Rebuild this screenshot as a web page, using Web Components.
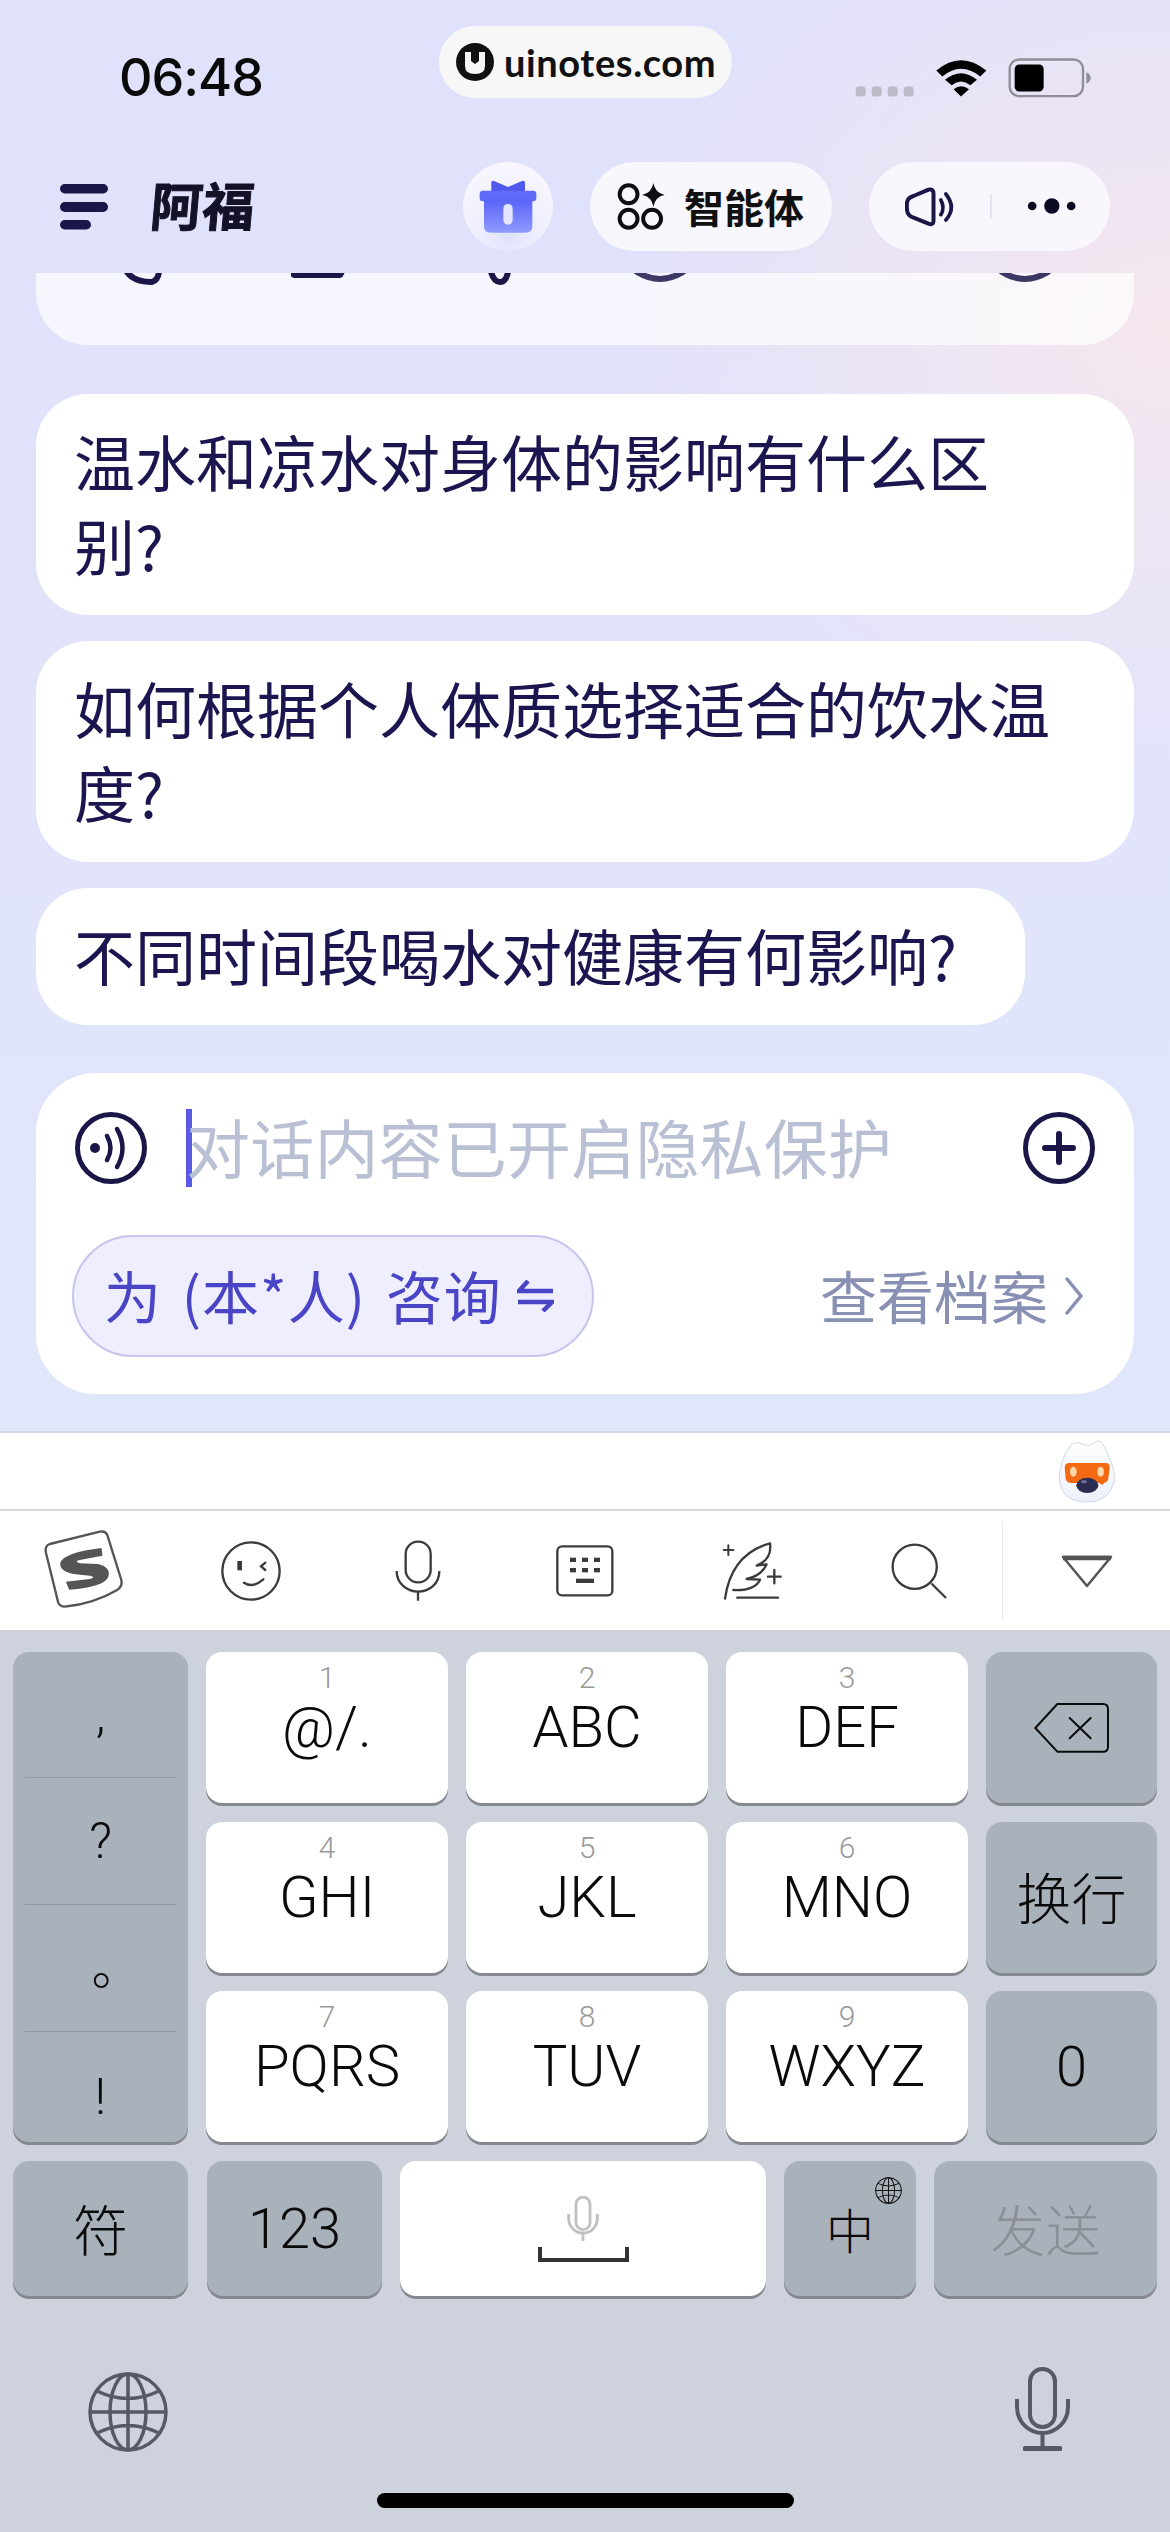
<!DOCTYPE html>
<html lang="zh-CN">
<head>
<meta charset="utf-8">
<title>阿福</title>
<style>
html, body { margin: 0; padding: 0; }
body { width: 1170px; height: 2532px; overflow: hidden; font-family: "Noto Sans CJK SC", "Liberation Sans", sans-serif; }
</style>
</head>
<body>
<app-shell>
  <status-bar time="06:48"></status-bar>
  <chat-header title="阿福"></chat-header>
  <chat-list>
    <suggest-bubble wide>温水和凉水对身体的影响有什么区<br>别?</suggest-bubble>
    <suggest-bubble wide>如何根据个人体质选择适合的饮水温<br>度?</suggest-bubble>
    <suggest-bubble>不同时间段喝水对健康有何影响?</suggest-bubble>
    <chat-input></chat-input>
  </chat-list>
  <ime-toolbar></ime-toolbar>
  <key-board></key-board>
</app-shell>

<script>
const NAVY = "#1a1648"

class AppShell extends HTMLElement {
    constructor() {
        super()
        this.attachShadow({ mode: "open" })
        this.shadowRoot.innerHTML = `
        <style>
        :host {
            display: flex;
            flex-direction: column;
            position: relative;
            width: 1170px;
            height: 2532px;
            background:
                radial-gradient(560px 460px at 100% 13%, rgba(250,232,234,.8), rgba(250,232,234,0)),
                linear-gradient(180deg, #e0e1fb 0, #e1e3fb 600px, #e1e7fb 1431px);
        }
        </style>
        <slot></slot>
        `
    }
}

class StatusBar extends HTMLElement {
    constructor() {
        super()
        this.attachShadow({ mode: "open" })
        this.shadowRoot.innerHTML = `
        <style>
        :host {
            display: flex;
            position: relative;
            justify-content: space-between;
            align-items: flex-start;
            box-sizing: border-box;
            height: 162px;
            padding: 57px 77px 0 119px;
        }
        .time { font: 500 52px/42px Inter, "Liberation Sans", sans-serif; color: #0a0a0a; letter-spacing: -1px; }
        .mark {
            position: absolute;
            left: 439px;
            top: 26px;
            width: 293px;
            height: 72px;
            box-sizing: border-box;
            padding-left: 17px;
            gap: 10px;
            display: flex;
            align-items: center;
            border-radius: 36px;
            background: #f7f7f7;
            color: #111;
            font: 700 38px/72px Lato, "Liberation Sans", sans-serif;
            letter-spacing: 0.6px;
        }
        svg { display: block; flex: none; }
        </style>
        <span class="time">${this.getAttribute("time")}</span>
        <div class="mark">
            <svg width="38" height="38" viewBox="0 0 38 38">
                <circle cx="19" cy="19" r="19" fill="#111"/>
                <path d="M9 9h6v9l4 3 4-3V9h6v14q0 8-10 8T9 23z" fill="#f7f7f7"/>
            </svg>
            <span>uinotes.com</span>
        </div>
        <svg width="240" height="42" viewBox="40 50 720 125">
            <g fill="#bcbcc8">
                <rect x="48" y="138" width="30" height="30" rx="9"/>
                <rect x="96" y="138" width="30" height="30" rx="9"/>
                <rect x="144" y="138" width="30" height="30" rx="9"/>
                <rect x="192" y="138" width="30" height="30" rx="9"/>
            </g>
            <g fill="#000">
                <path d="M290 90Q364 28 440 90L422 108Q364 62 308 108Z"/>
                <path d="M316 118Q364 78 412 118L392 134Q364 112 336 134Z"/>
                <path d="M342 146Q364 128 388 146L364 168Z"/>
            </g>
            <rect x="510" y="57" width="220" height="110" rx="28" fill="none" stroke="#8e8e98" stroke-width="7"/>
            <rect x="525" y="72" width="87" height="81" rx="14" fill="#000"/>
            <path d="M740 95q13 6 13 17t-13 18z" fill="#8e8e98"/>
        </svg>
        `
    }
}

class ChatHeader extends HTMLElement {
    constructor() {
        super()
        this.attachShadow({ mode: "open" })
        this.shadowRoot.innerHTML = `
        <style>
        :host {
            display: flex;
            align-items: center;
            box-sizing: border-box;
            height: 89px;
            margin-bottom: 22px;
            padding: 0 60px;
            color: ${NAVY};
        }
        svg { display: block; flex: none; }
        .title {
            display: inline-block;
            margin: -6px 0 0 43px;
            font: 700 52px/89px "Noto Sans CJK SC", sans-serif;
            color: #141226;
            transform: skewX(-5deg);
            -webkit-text-stroke: 1px #141226;
        }
        .gift {
            margin-left: auto;
            width: 90px;
            height: 89px;
            border-radius: 50%;
            display: flex;
            align-items: center;
            justify-content: center;
            background: radial-gradient(circle at 50% 82%, #dfe2fd 0, #f0f0fd 40%, #f7f6fe 75%);
        }
        .pill {
            display: flex;
            align-items: center;
            height: 89px;
            border-radius: 45px;
            background: rgba(250,249,254,.92);
            box-sizing: border-box;
        }
        .agent { width: 242px; margin-left: 37px; padding-left: 27px; font: 700 40px/89px "Noto Sans CJK SC", sans-serif; color: #111; gap: 19px; }
        .more { width: 241px; margin-left: 37px; margin-right: 0; padding-left: 36px; }
        </style>
        <svg width="48" height="46" viewBox="0 0 48 46">
            <rect x="0" y="0" width="48" height="9.5" rx="4.7" fill="${NAVY}"/>
            <rect x="0" y="18" width="48" height="10" rx="5" fill="${NAVY}"/>
            <rect x="0" y="36" width="31" height="9.5" rx="4.7" fill="${NAVY}"/>
        </svg>
        <span class="title">${this.getAttribute("title")}</span>
        <div class="gift">
            <svg width="58" height="54" viewBox="118 88 174 162">
                <defs><linearGradient id="g" x1="0" y1="0" x2="0" y2="1"><stop offset="0" stop-color="#5a62f7"/><stop offset="1" stop-color="#8e9cff"/></linearGradient></defs>
                <path d="M155 96q0-8 8-5l42 18 42-18q8-3 9 5v26H155z" fill="#5058ee"/>
                <rect x="120" y="120" width="170" height="32" rx="9" fill="#6069f8"/>
                <path d="M133 146h145v80q0 20-20 20H153q-20 0-20-20z" fill="url(#g)"/>
                <rect x="191" y="160" width="28" height="62" rx="14" fill="#e4e6ff"/>
            </svg>
        </div>
        <div class="pill agent">
            <svg width="48" height="48" viewBox="530 100 145 145" fill="none" stroke="#0d0d12" stroke-width="12">
                <circle cx="565" cy="134" r="27"/>
                <circle cx="565" cy="208" r="27"/>
                <circle cx="636" cy="208" r="27"/>
                <path d="M640 100q5 30 34 36q-29 5-34 36q-5-31-34-36q29-6 34-36z" fill="#0d0d12" stroke="none"/>
            </svg>
            <span>智能体</span>
        </div>
        <div class="pill more">
            <svg width="172" height="42" viewBox="190 440 515 126">
                <path d="M215 470L260 451Q275 447 275 464V545Q275 558 260 553L215 535Q195 530 195 505V495Q195 475 215 470Z" fill="none" stroke="${NAVY}" stroke-width="12" stroke-linejoin="round"/>
                <path d="M297 482Q310 505 297 526M312 464Q345 505 312 542" fill="none" stroke="${NAVY}" stroke-width="11" stroke-linecap="round"/>
                <rect x="445" y="463" width="4" height="76" fill="#dcdcea"/>
                <circle cx="571" cy="500" r="13" fill="#0c0a22"/>
                <circle cx="630" cy="500" r="23" fill="#0c0a22"/>
                <circle cx="688" cy="500" r="13" fill="#0c0a22"/>
            </svg>
        </div>
        `
    }
}

class ChatList extends HTMLElement {
    constructor() {
        super()
        this.attachShadow({ mode: "open" })
        this.shadowRoot.innerHTML = `
        <style>
        :host {
            display: flex;
            flex-direction: column;
            box-sizing: border-box;
            height: 1158px;
            padding: 0 36px;
            overflow: hidden;
            flex: none;
        }
        .prev { height: 72px; flex: none; border-radius: 0 0 52px 52px; background: rgba(255,255,255,.7); margin-bottom: 49px; }
        svg { display: block; }
        .items { display: flex; flex-direction: column; gap: 26px; }
        </style>
        <div class="prev">
            <svg width="1098" height="14" viewBox="36 273 1098 14" fill="none" stroke="${NAVY}" stroke-width="6" stroke-linecap="round">
                <path d="M127 272Q134 282 152 282Q158 280 159 272"/>
                <path d="M291 270H346L343 276Q342 278 338 278H296Q292 278 291 276Z" fill="${NAVY}" stroke="none"/>
                <path d="M491 272Q494 282 500 282Q506 282 508 272"/>
                <path d="M637 272Q660 286 683 272" opacity=".85"/>
                <path d="M1002 272Q1025 286 1048 272" opacity=".85"/>
            </svg>
        </div>
        <div class="items"><slot></slot></div>
        `
    }
}

class SuggestBubble extends HTMLElement {
    constructor() {
        super()
        this.attachShadow({ mode: "open" })
        this.shadowRoot.innerHTML = `
        <style>
        :host {
            display: block;
            width: fit-content;
            box-sizing: border-box;
            padding: 25px 68px 28px 38px;
            border-radius: 52px;
            background: #fff;
            color: #1b1650;
            font: 400 61px/84px "Noto Sans CJK SC", sans-serif;
        }
        :host([wide]) { width: 100%; }
        </style>
        <slot></slot>
        `
    }
}

class ChatInput extends HTMLElement {
    constructor() {
        super()
        this.attachShadow({ mode: "open" })
        this.shadowRoot.innerHTML = `
        <style>
        :host {
            display: block;
            box-sizing: border-box;
            height: 321px;
            margin-top: 22px;
            padding: 39px 39px 0 36px;
            border-radius: 60px;
            background: #fff;
        }
        svg { display: block; flex: none; }
        .row { display: flex; align-items: center; }
        .top { height: 72px; padding-left: 3px; }
        .caret { width: 6px; height: 78px; margin-left: 39px; background: #5a5ae6; flex: none; }
        .hint { margin: -6px 0 0 -6px; font: 400 64px/72px "Noto Sans CJK SC", sans-serif; letter-spacing: .2px; color: #b9c0d4; white-space: nowrap; }
        .plus { margin-left: auto; }
        .bottom { margin-top: 51px; height: 122px; }
        .chip {
            display: flex;
            align-items: center;
            box-sizing: border-box;
            width: 522px;
            height: 122px;
            padding-left: 30px;
            border: 2px solid #c8c3ef;
            border-radius: 61px;
            background: #efeefe;
            color: #4a45c6;
            font: 400 57px/118px "Noto Sans CJK SC", sans-serif;
            letter-spacing: 1px;
            word-spacing: 6px;
            white-space: nowrap;
        }
        .chip span { margin-top: -4px; }
        .chip svg { margin-left: 15px; }
        .link { margin-left: auto; display: flex; align-items: center; gap: 17px; color: #8890b4; font: 400 57px/122px "Noto Sans CJK SC", sans-serif; margin-right: 12px; }
        .link span { margin-top: -4px; }
        </style>
        <div class="row top">
            <svg width="72" height="72" viewBox="0 0 72 72" fill="none" stroke="${NAVY}">
                <circle cx="36" cy="36" r="33.5" stroke-width="5"/>
                <circle cx="20" cy="36" r="5" fill="${NAVY}" stroke="none"/>
                <path d="M32 24Q39 36 32 48" stroke-width="4.5" stroke-linecap="round"/>
                <path d="M42 17Q53 36 42 55" stroke-width="4.5" stroke-linecap="round"/>
            </svg>
            <span class="caret"></span>
            <span class="hint">对话内容已开启隐私保护</span>
            <svg class="plus" width="72" height="72" viewBox="0 0 72 72" fill="none" stroke="${NAVY}">
                <circle cx="36" cy="36" r="33.5" stroke-width="5"/>
                <path d="M36 22V50M22 36H50" stroke-width="6" stroke-linecap="round"/>
            </svg>
        </div>
        <div class="row bottom">
            <div class="chip">
                <span>为 (本*人) 咨询</span>
                <svg width="37" height="32" viewBox="0 0 37 32" fill="none" stroke="#4a45c6" stroke-width="4.5">
                    <path d="M11 1L2 11H36M1 22H35L26 31"/>
                </svg>
            </div>
            <div class="link">
                <span>查看档案</span>
                <svg width="18" height="38" viewBox="0 0 18 38" fill="none" stroke="#8890b4" stroke-width="3.5" stroke-linecap="round">
                    <path d="M2 2L16 19L2 36"/>
                </svg>
            </div>
        </div>
        `
    }
}

class ImeToolbar extends HTMLElement {
    constructor() {
        super()
        this.attachShadow({ mode: "open" })
        const ink = "#3b3b3b"
        this.shadowRoot.innerHTML = `
        <style>
        :host { display: block; background: #fff; border-top: 2px solid #d4d6e6; flex: none; }
        .mascot { display: flex; justify-content: flex-end; box-sizing: border-box; height: 76px; padding: 6px 54px 0 0; }
        .tools {
            display: grid;
            grid-template-columns: repeat(6, 167px) 168px;
            align-items: center;
            justify-items: center;
            height: 119px;
            border-top: 2px solid #d8d8d8;
        }
        .cell { display: flex; align-items: center; justify-content: center; }
        .s { margin-top: -3px; }
        .last { width: 100%; height: 98px; border-left: 1px solid #e8e8e8; }
        svg { display: block; }
        </style>
        <div class="mascot">
            <svg width="58" height="64" viewBox="52 26 174 192">
                <defs><linearGradient id="eg" x1="0" y1="0" x2="0" y2="1"><stop offset="0" stop-color="#fff"/><stop offset="1" stop-color="#eef1fb"/></linearGradient></defs>
                <path d="M125 42Q145 52 170 32Q186 30 200 70Q226 120 220 155Q205 215 140 215Q65 215 56 150Q56 90 90 45Q105 30 125 42Z" fill="url(#eg)" stroke="#cfd6ea" stroke-width="3"/>
                <path d="M86 98H195Q208 98 207 112L203 145Q200 157 190 157L186 164L176 158H92Q78 158 75 145L72 112Q72 98 86 98Z" fill="#f46a12"/>
                <ellipse cx="98" cy="124" rx="10" ry="15" fill="#ffd9a8"/>
                <ellipse cx="180" cy="124" rx="10" ry="15" fill="#ffd9a8"/>
                <ellipse cx="140" cy="165" rx="33" ry="23" fill="#2a2c50"/>
                <ellipse cx="130" cy="154" rx="9" ry="5" fill="#6a6d92"/>
            </svg>
        </div>
        <div class="tools">
            <div class="cell s"><svg width="82" height="80" viewBox="40 25 245 240" fill="none" stroke="#555" stroke-width="7">
                <path d="M60 70L210 33Q228 30 233 45L272 170Q282 195 262 208Q190 250 105 258Q90 258 85 245L48 95Q45 75 60 70Z"/>
                <path d="M215 82L218 105L150 118Q130 122 150 128L205 130Q245 140 235 170Q220 200 118 207L108 183L180 175Q200 170 180 165L130 160Q85 150 92 125Q105 95 215 82Z" fill="#555" stroke="none"/>
            </svg></div>
            <div class="cell"><svg width="60" height="60" viewBox="573 55 180 180" fill="none" stroke="${ink}" stroke-width="7" stroke-linecap="round">
                <circle cx="663" cy="145" r="86"/>
                <rect x="622" y="115" width="14" height="28" fill="${ink}" stroke="none"/>
                <path d="M706 120L693 131L706 142"/>
                <path d="M642 180Q668 198 700 170"/>
            </svg></div>
            <div class="cell"><svg width="46" height="62" viewBox="1095 55 138 186" fill="none" stroke="${ink}" stroke-width="7">
                <rect x="1127" y="60" width="75" height="122" rx="37"/>
                <path d="M1100 148C1100 185 1130 210 1164 210C1200 210 1228 185 1228 148M1164 210V237"/>
            </svg></div>
            <div class="cell"><svg width="58" height="52" viewBox="48 69 174 156" fill="none" stroke="${ink}" stroke-width="7">
                <rect x="52" y="73" width="165" height="147" rx="14"/>
                <g fill="${ink}" stroke="none">
                    <rect x="90" y="107" width="18" height="13"/><rect x="126" y="107" width="18" height="13"/><rect x="162" y="107" width="18" height="13"/>
                    <rect x="90" y="138" width="18" height="13"/><rect x="126" y="138" width="18" height="13"/><rect x="162" y="138" width="18" height="13"/>
                    <rect x="108" y="170" width="54" height="13"/>
                </g>
            </svg></div>
            <div class="cell"><svg width="60" height="60" viewBox="546 58 180 180" fill="none" stroke="${ink}" stroke-width="7" stroke-linecap="round" stroke-linejoin="round">
                <path d="M555 231C565 160 600 90 690 65C695 100 680 120 650 132L680 128C670 150 650 165 620 172L660 174C650 195 625 207 580 205"/>
                <path d="M592 228H714"/>
                <path d="M565 71V100M551 85H580" stroke-width="6"/>
                <path d="M703 145V185M684 165H722"/>
            </svg></div>
            <div class="cell"><svg width="56" height="56" viewBox="1050 60 170 170" fill="none" stroke="${ink}" stroke-width="7">
                <circle cx="1122" cy="132" r="67"/>
                <path d="M1173 183L1217 227"/>
            </svg></div>
            <div class="cell last"><svg width="54" height="34" viewBox="0 0 54 34" fill="none" stroke="#555" stroke-width="2.5" stroke-linejoin="round">
                <path d="M3 3H51L27 32Z"/>
                <path d="M3 4H51" stroke-width="4.5"/>
            </svg></div>
        </div>
        `
    }
}

class KbKey extends HTMLElement {
    constructor() {
        super()
        this.attachShadow({ mode: "open" })
        const num = this.getAttribute("num")
        this.shadowRoot.innerHTML = `
        <style>
        :host {
            display: flex;
            flex-direction: column;
            align-items: center;
            justify-content: ${num ? "flex-start" : "center"};
            position: relative;
            box-sizing: border-box;
            border-radius: 16px;
            background: #fff;
            box-shadow: 0 3px 0 #85888e;
            color: #0a0a0a;
            font: 300 58px/74px Roboto, "Noto Sans CJK SC", sans-serif;
        }
        :host([dark]) { background: #a9b1bb; }
        .num { margin-top: 13px; font: 300 30px/25px Roboto, sans-serif; color: #999; }
        </style>
        ${num ? `<span class="num">${num}</span>` : ""}
        <slot></slot>
        `
    }
}

class KeyBoard extends HTMLElement {
    constructor() {
        super()
        this.attachShadow({ mode: "open" })
        const grey = "#555a66"
        const micBody = `<rect x="15" y="2" width="25" height="58" rx="12.5"/><path d="M2 32V40C2 55 14 66 27.5 66C41 66 53 55 53 40V32M27.5 66V80"/>`
        const cell = (ch, cls) => `<div class="sym ${cls}"><span>${ch}</span></div>`
        this.shadowRoot.innerHTML = `
        <style>
        :host {
            display: block;
            box-sizing: border-box;
            flex: 1;
            padding: 22px 13px 0;
            background: #cdd2dd;
        }
        .grid {
            display: grid;
            grid-template-columns: 175px 242px 242px 242px 171px;
            grid-template-rows: repeat(3, 151px);
            gap: 18.5px 18px;
        }
        .side {
            grid-row: 1 / span 3;
            border-radius: 16px;
            background: #a9b1bb;
            box-shadow: 0 3px 0 #85888e;
            display: flex;
            flex-direction: column;
            padding: 0 12px;
            font: 300 50px/60px Roboto, "Noto Sans CJK SC", sans-serif;
            color: #0a0a0a;
        }
        .sym { display: flex; justify-content: center; align-items: center; box-sizing: border-box; }
        .s1 { height: 126px; border-bottom: 1.5px solid #959ba5; }
        .s2 { height: 127px; border-bottom: 1.5px solid #959ba5; }
        .s3 { height: 127px; border-bottom: 1.5px solid #959ba5; padding: 0 0 0 32px; }
        .s4 { flex: 1; padding-top: 20px; }
        .last {
            display: flex;
            gap: 18px;
            height: 135px;
            margin-top: 19px;
        }
        .last kb-key { flex: none; }
        .w175 { width: 175px; }
        .zh { font: 300 55px/74px "Noto Sans CJK SC", sans-serif; padding-bottom: 4px; }
        .digit { font-size: 56px; }
        .gap19 { margin-left: 1px; }
        svg { display: block; }
        .space { width: 366px; gap: 5px; }
        .cn { width: 132px; padding-bottom: 2px; font: 300 48px/60px "Noto Sans CJK SC", sans-serif; }
        .small-globe { position: absolute; top: 16px; right: 14px; }
        .send { width: 223px; color: #8b9097; }
        .bottom { display: flex; justify-content: space-between; align-items: flex-start; margin-top: 76px; padding: 0 87px 0 75px; }
        .home { width: 417px; height: 15px; margin: 41px auto 0; border-radius: 8px; background: #000; }
        </style>
        <div class="grid">
            <div class="side">${cell(",", "s1")}${cell("?", "s2")}${cell("。", "s3")}${cell("!", "s4")}</div>
            <kb-key num="1">@/.</kb-key>
            <kb-key num="2">ABC</kb-key>
            <kb-key num="3">DEF</kb-key>
            <kb-key dark>
                <svg width="75" height="50" viewBox="398 187 225 150" fill="none" stroke="#0a0a0a" stroke-width="6" stroke-linejoin="round" stroke-linecap="round">
                    <path d="M402 262L468 190H605Q620 190 620 205V318Q620 333 605 333H468Z"/>
                    <path d="M505 232L568 293M568 232L505 293"/>
                </svg>
            </kb-key>
            <kb-key num="4">GHI</kb-key>
            <kb-key num="5">JKL</kb-key>
            <kb-key num="6">MNO</kb-key>
            <kb-key dark class="zh">换行</kb-key>
            <kb-key num="7">PQRS</kb-key>
            <kb-key num="8">TUV</kb-key>
            <kb-key num="9">WXYZ</kb-key>
            <kb-key dark class="digit">0</kb-key>
        </div>
        <div class="last">
            <kb-key dark class="w175 zh">符</kb-key>
            <kb-key dark class="w175 digit gap19">123</kb-key>
            <kb-key class="space">
                <svg width="32" height="46" viewBox="0 0 55 82" fill="none" stroke="#c0c0c0" stroke-width="5">${micBody}</svg>
                <svg width="91" height="15" viewBox="0 0 91 15" fill="none" stroke="#333" stroke-width="4"><path d="M2 0V13H89V0"/></svg>
            </kb-key>
            <kb-key dark class="cn">中
                <svg class="small-globe" width="27" height="27" viewBox="0 0 80 80" fill="none" stroke="#111" stroke-width="3">
                    <circle cx="40" cy="40" r="38"/><ellipse cx="40" cy="40" rx="18" ry="38"/><path d="M40 2V78M2 40H78M9 19Q40 34 71 19M9 61Q40 46 71 61"/>
                </svg>
            </kb-key>
            <kb-key dark class="send zh">发送</kb-key>
        </div>
        <div class="bottom">
            <svg width="80" height="80" viewBox="0 0 80 80" fill="none" stroke="${grey}" stroke-width="3.5">
                <circle cx="40" cy="40" r="38"/><ellipse cx="40" cy="40" rx="18" ry="38"/><path d="M40 2V78M2 40H78M9 19Q40 34 71 19M9 61Q40 46 71 61"/>
            </svg>
            <svg style="margin-top:-5px" width="55" height="84" viewBox="0 0 55 84" fill="none" stroke="${grey}" stroke-width="4">
                ${micBody}
                <rect x="8" y="79" width="39" height="5" rx="1.5" fill="${grey}" stroke="none"/>
            </svg>
        </div>
        <div class="home"></div>
        `
    }
}

customElements.define("app-shell", AppShell)
customElements.define("status-bar", StatusBar)
customElements.define("chat-header", ChatHeader)
customElements.define("chat-list", ChatList)
customElements.define("suggest-bubble", SuggestBubble)
customElements.define("chat-input", ChatInput)
customElements.define("ime-toolbar", ImeToolbar)
customElements.define("kb-key", KbKey)
customElements.define("key-board", KeyBoard)
</script>
</body>
</html>
